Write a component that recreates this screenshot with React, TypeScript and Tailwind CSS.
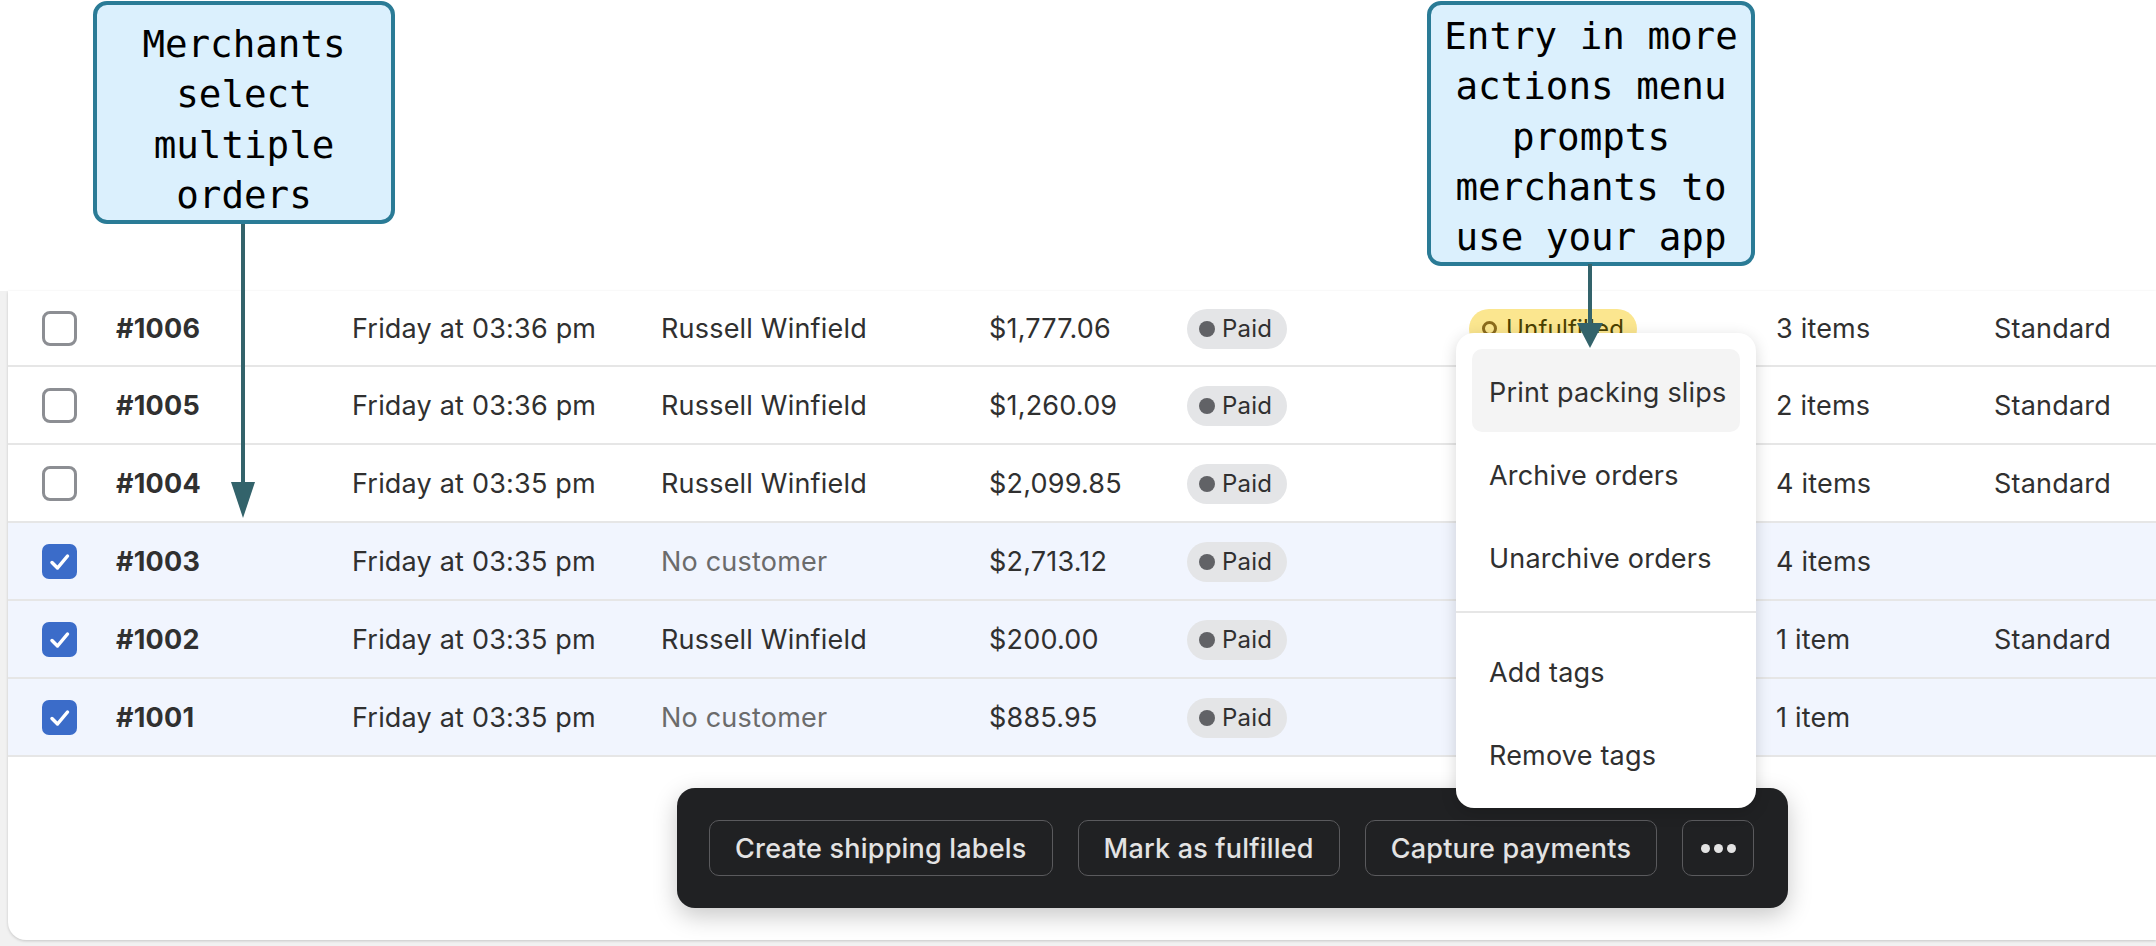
import React from 'react';

type Order = {
  id: string;
  date: string;
  customer: string | null;
  total: string;
  items: string;
  delivery: string;
  selected: boolean;
};

const orders: Order[] = [
  { id: '#1006', date: 'Friday at 03:36 pm', customer: 'Russell Winfield', total: '$1,777.06', items: '3 items', delivery: 'Standard', selected: false },
  { id: '#1005', date: 'Friday at 03:36 pm', customer: 'Russell Winfield', total: '$1,260.09', items: '2 items', delivery: 'Standard', selected: false },
  { id: '#1004', date: 'Friday at 03:35 pm', customer: 'Russell Winfield', total: '$2,099.85', items: '4 items', delivery: 'Standard', selected: false },
  { id: '#1003', date: 'Friday at 03:35 pm', customer: null, total: '$2,713.12', items: '4 items', delivery: '', selected: true },
  { id: '#1002', date: 'Friday at 03:35 pm', customer: 'Russell Winfield', total: '$200.00', items: '1 item', delivery: 'Standard', selected: true },
  { id: '#1001', date: 'Friday at 03:35 pm', customer: null, total: '$885.95', items: '1 item', delivery: '', selected: true },
];

const Checkbox: React.FC<{ checked: boolean }> = ({ checked }) =>
  checked ? (
    <div className="w-[35px] h-[35px] rounded-[7px] bg-[#3b6cc9] flex items-center justify-center">
      <svg width="35" height="35" viewBox="0 0 35 35" fill="none">
        <path d="M10 18.5 L15.5 24 L25.5 12" stroke="white" strokeWidth="3.5" strokeLinecap="round" strokeLinejoin="round" />
      </svg>
    </div>
  ) : (
    <div className="w-[35px] h-[35px] rounded-[8px] border-[3px] border-[#8c8e93] bg-white" />
  );

const PaidBadge = () => (
  <span className="inline-flex items-center h-[40px] w-[100px] rounded-full bg-[#e4e5e7] pl-[12px] gap-[7px] text-[24px] text-[#303030]">
    <span className="w-[16px] h-[16px] rounded-full bg-[#616266]" />
    Paid
  </span>
);

const UnfulfilledBadge = () => (
  <span className="inline-flex items-center h-[40px] w-[168px] rounded-full bg-[#fbe68f] pl-[13px] gap-[9px] text-[24px] text-[#4a4000]">
    <span className="w-[15px] h-[15px] rounded-full border-[3.5px] border-[#8b6b1c]" />
    Unfulfilled
  </span>
);

const Callout: React.FC<{ lines: string[]; className: string }> = ({ lines, className }) => (
  <div
    className={
      'absolute bg-[#dbf0fd] border-4 border-[#2a7b96] rounded-[14px] text-center text-black text-[37.5px] leading-[50.3px] font-[family-name:"DejaVu_Sans_Mono",monospace] ' +
      className
    }
  >
    {lines.map((l) => (
      <div key={l} className="whitespace-pre">{l}</div>
    ))}
  </div>
);

const menuTop = ['Print packing slips', 'Archive orders', 'Unarchive orders'];
const menuBottom = ['Add tags', 'Remove tags'];

export default function App() {
  return (
    <div className="relative w-[2156px] h-[946px] overflow-hidden bg-white font-[family-name:Inter,sans-serif] text-[#303030]">
      {/* annotation canvas */}
      <div className="h-[291px]" />

      {/* orders table */}
      <div className="flex h-[655px] bg-[#f1f1f1] pl-2">
        <div className="flex-1 self-start h-[649px] bg-white rounded-bl-[18px] shadow-[0_1px_3px_rgba(0,0,0,0.18)]">
          {orders.map((o, i) => (
            <div
              key={o.id}
              className={
                'grid grid-cols-[74px_236px_309px_328px_198px_282px_307px_218px_1fr] items-center pl-[34px] pt-[2px] border-b-2 border-[#e6e6e6] text-[27px] tracking-[0.2px] ' +
                (i === 0 ? 'h-[76px] ' : 'h-[78px] ') +
                (o.selected ? 'bg-[#f1f5fe]' : 'bg-white')
              }
            >
              <div className="-mt-[2px]"><Checkbox checked={o.selected} /></div>
              <span className="font-bold">{o.id}</span>
              <span>{o.date}</span>
              {o.customer ? <span>{o.customer}</span> : <span className="text-[#6b6b6b]">No customer</span>}
              <span>{o.total}</span>
              <div className="-mt-[2px]"><PaidBadge /></div>
              {/* only the first badge peeks out above the open menu */}
              <div className="-mt-[2px]">{i === 0 && <UnfulfilledBadge />}</div>
              <span>{o.items}</span>
              <span>{o.delivery}</span>
            </div>
          ))}
        </div>
      </div>

      {/* bulk actions bar */}
      <div className="absolute left-[677px] top-[788px] w-[1111px] h-[120px] rounded-[18px] bg-[#202123] shadow-[0_8px_24px_rgba(0,0,0,0.22)] flex items-center gap-[25px] px-[32px]">
        {['Create shipping labels', 'Mark as fulfilled', 'Capture payments'].map((b) => (
          <button
            key={b}
            className="h-[56px] px-[25px] pt-[2px] rounded-[10px] border-[1.5px] border-[#5a5a5d] text-[#e3e3e3] text-[27px] font-medium tracking-[0.2px] whitespace-nowrap"
          >
            {b}
          </button>
        ))}
        <button className="h-[56px] w-[72px] rounded-[10px] border-[1.5px] border-[#5a5a5d] flex items-center justify-center gap-[4px]">
          <span className="w-[9px] h-[9px] rounded-full bg-[#e3e3e3]" />
          <span className="w-[9px] h-[9px] rounded-full bg-[#e3e3e3]" />
          <span className="w-[9px] h-[9px] rounded-full bg-[#e3e3e3]" />
        </button>
      </div>

      {/* more actions menu */}
      <div className="absolute left-[1456px] top-[333px] w-[300px] h-[475px] rounded-[18px] bg-white shadow-[0_4px_16px_rgba(0,0,0,0.16)] text-[27px] tracking-[0.2px] text-[#303030]">
        <div className="px-4 pt-4 pb-[13px] border-b-2 border-[#e6e6e6]">
          {menuTop.map((m, i) => (
            <div key={m} className={'h-[83px] flex items-center pl-[17px] pt-[5px] rounded-[10px] ' + (i === 0 ? 'bg-[#f4f4f4]' : '')}>
              {m}
            </div>
          ))}
        </div>
        <div className="px-4 pt-4">
          {menuBottom.map((m) => (
            <div key={m} className="h-[83px] flex items-center pl-[17px] pt-[5px]">
              {m}
            </div>
          ))}
        </div>
      </div>

      {/* callouts */}
      <Callout lines={['Merchants', 'select', 'multiple', 'orders']} className="left-[93px] top-[1px] w-[302px] pt-[14px] pb-0" />
      <Callout
        lines={['Entry in more', 'actions menu', 'prompts', 'merchants to', 'use your app']}
        className="left-[1427px] top-[1px] w-[328px] pt-[6px] pb-0"
      />

      {/* arrows */}
      <svg className="absolute left-[229px] top-[224px]" width="28" height="296" viewBox="0 0 28 296">
        <line x1="14" y1="0" x2="14" y2="262" stroke="#33636b" strokeWidth="4" />
        <path d="M2 258 L26 258 L14 294 Z" fill="#33636b" />
      </svg>
      <svg className="absolute left-[1576px] top-[264px]" width="28" height="86" viewBox="0 0 28 86">
        <line x1="14" y1="0" x2="14" y2="62" stroke="#33636b" strokeWidth="4" />
        <path d="M1 59 L27 59 L14 84 Z" fill="#33636b" />
      </svg>
    </div>
  );
}
